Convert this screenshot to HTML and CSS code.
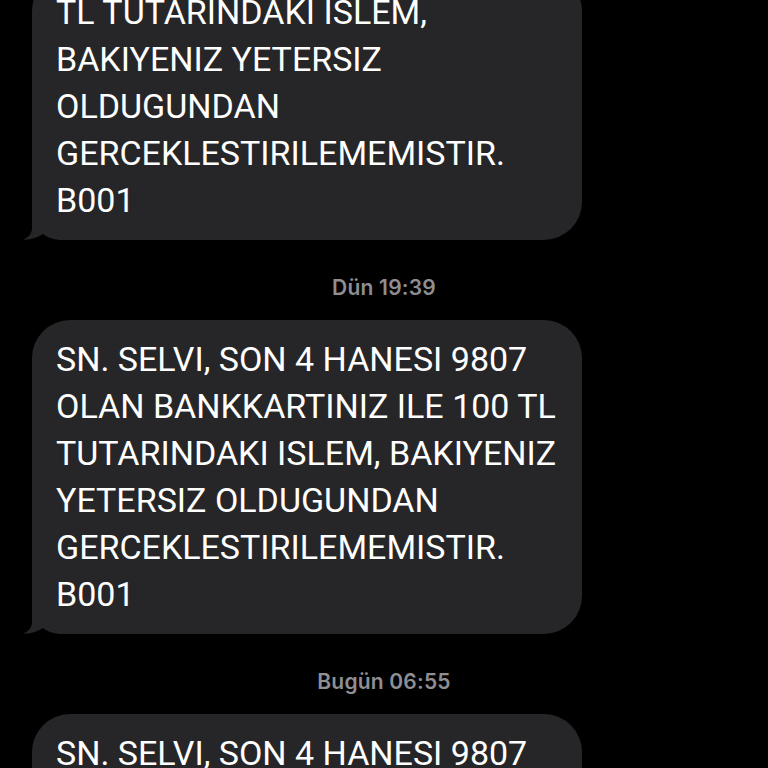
FILE: index.html
```
<!DOCTYPE html>
<html lang="tr">
<head>
<meta charset="utf-8">
<link rel="stylesheet" href="styles.css">
</head>
<body>
<div class="thread">
  <div class="bubble">
    <p class="msg">TL TUTARINDAKI ISLEM,<br>BAKIYENIZ YETERSIZ<br>OLDUGUNDAN<br>GERCEKLESTIRILEMEMISTIR.<br>B001</p>
    <svg class="tail" viewBox="0 0 22 30" width="22" height="30"><path d="M11,0 L11,18 C11,24 7,28 1.5,29.6 C8,30.2 15,28.5 22,24 L22,0 Z"/></svg>
  </div>
  <div class="stamp">Dün 19:39</div>
  <div class="bubble">
    <p class="msg">SN. SELVI, SON 4 HANESI 9807<br>OLAN BANKKARTINIZ ILE 100 TL<br>TUTARINDAKI ISLEM, BAKIYENIZ<br>YETERSIZ OLDUGUNDAN<br>GERCEKLESTIRILEMEMISTIR.<br>B001</p>
    <svg class="tail" viewBox="0 0 22 30" width="22" height="30"><path d="M11,0 L11,18 C11,24 7,28 1.5,29.6 C8,30.2 15,28.5 22,24 L22,0 Z"/></svg>
  </div>
  <div class="stamp">Bugün 06:55</div>
  <div class="bubble">
    <p class="msg">SN. SELVI, SON 4 HANESI 9807<br>OLAN BANKKARTINIZ ILE 100 TL<br>TUTARINDAKI ISLEM, BAKIYENIZ</p>
  </div>
</div>
</body>
</html>
```
FILE: styles.css
```
html, body {
  margin: 0;
  padding: 0;
  background: #000;
}
body {
  width: 768px;
  height: 768px;
  overflow: hidden;
  font-family: Roboto, "Liberation Sans", sans-serif;
}
.thread {
  display: flex;
  flex-direction: column;
  margin-top: -27px;
}
.bubble {
  position: relative;
  box-sizing: border-box;
  width: 550px;
  margin-left: 32px;
  padding: 16px 20px 16px 24px;
  background: #262628;
  border-radius: 38px;
  border-bottom-left-radius: 28px;
}
.msg {
  margin: 0;
  color: #fff;
  font-size: 34px;
  line-height: 47px;
  font-weight: 400;
  white-space: nowrap;
}
.tail {
  position: absolute;
  left: -11px;
  bottom: 0;
  fill: #262628;
  display: block;
}
.stamp {
  margin: 36px 0 20px;
  text-align: center;
  color: #8e8e93;
  font-family: Inter, "Liberation Sans", sans-serif;
  font-size: 21px;
  line-height: 24px;
  font-weight: 600;
  letter-spacing: 0.2px;
}
```
